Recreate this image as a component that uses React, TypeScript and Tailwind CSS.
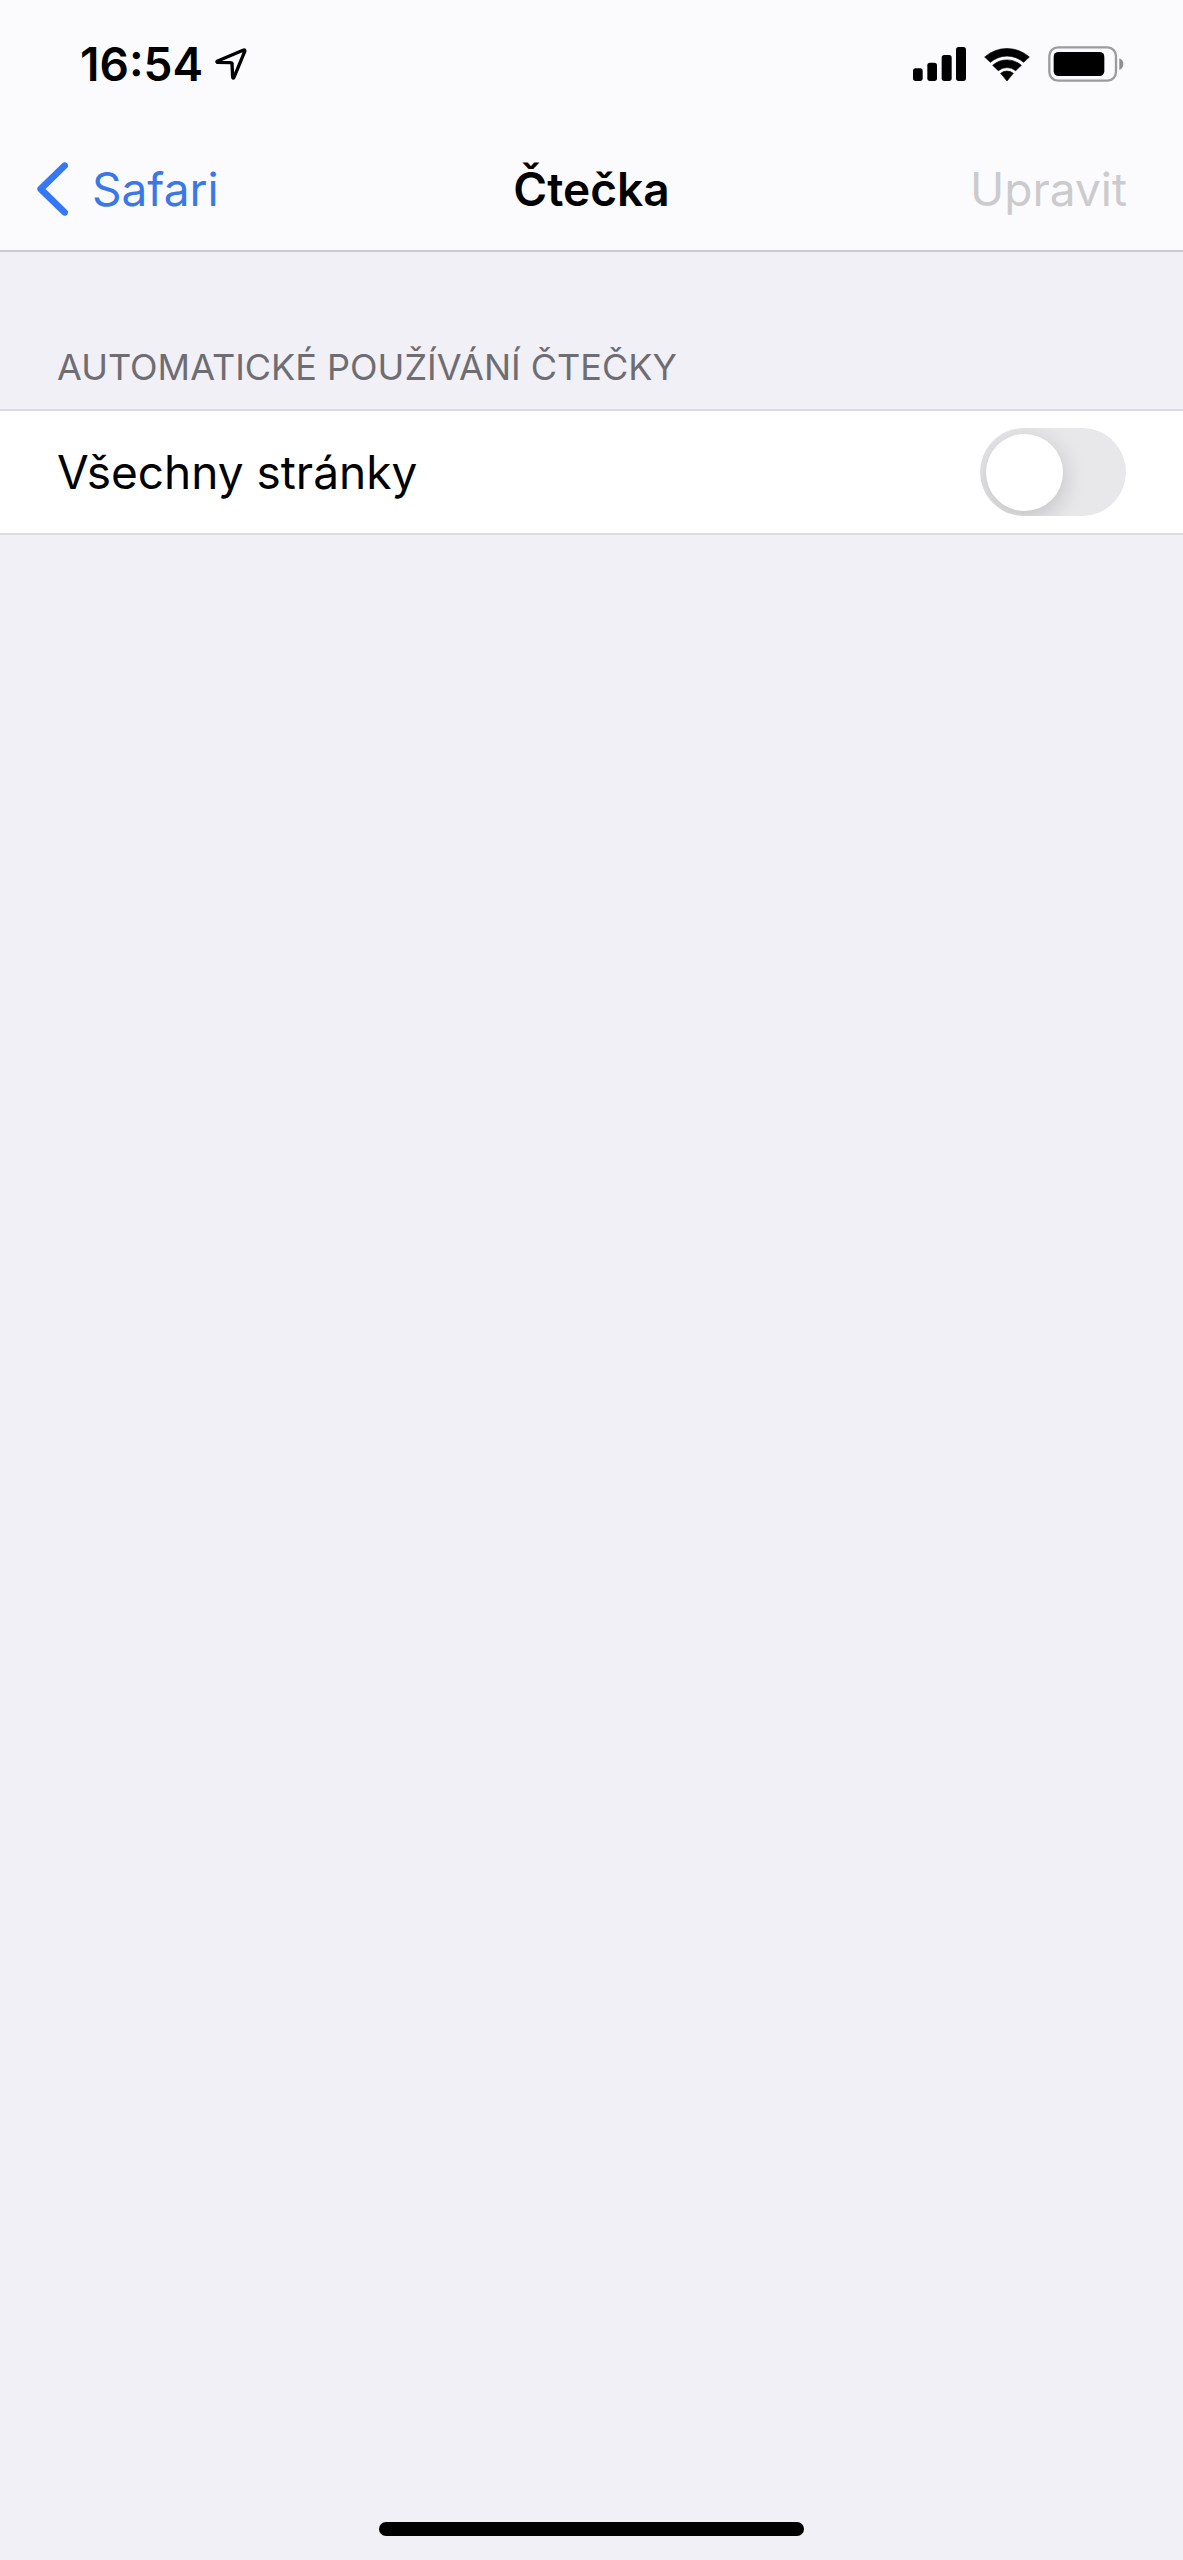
import { useState } from "react";

function LocationArrow() {
  return (
    <svg className="h-8 w-8" viewBox="0 0 96 96" fill="none" aria-hidden="true">
      <path
        d="M7 43 Q4 41 8 39 L84 7 Q91 4 89 11 L57 88 Q54 93 53 87 L51 47 Q51 44 47 44 Z"
        stroke="black"
        strokeWidth="10"
        strokeLinejoin="round"
      />
    </svg>
  );
}

function Signal() {
  return (
    <svg className="h-[34px] w-[53px]" viewBox="0 0 159 102" aria-hidden="true">
      <rect x="0" y="64" width="29" height="38" rx="8" />
      <rect x="43" y="47" width="29" height="55" rx="8" />
      <rect x="86" y="24" width="30" height="78" rx="8" />
      <rect x="129" y="0" width="30" height="102" rx="8" />
    </svg>
  );
}

function Wifi() {
  return (
    <svg className="h-[35px] w-[46px]" viewBox="0 0 138 105" aria-hidden="true">
      <g stroke="black" strokeWidth="2" strokeLinejoin="round">
        <path d="M2 30 A101 101 0 0 1 136 30 L119 46 A76 76 0 0 0 19 46 Z" />
        <path d="M26 55 A65 65 0 0 1 112 55 L95 71 A41 41 0 0 0 43 71 Z" />
        <path d="M50 79 A30 30 0 0 1 88 79 L69 102 Z" />
      </g>
    </svg>
  );
}

function Battery() {
  return (
    <svg className="h-9 w-[76px]" viewBox="0 0 228 108" aria-hidden="true">
      <rect x="4" y="4" width="200" height="100" rx="26" fill="none" stroke="#9b9b9d" strokeWidth="7" />
      <rect x="17" y="18" width="152" height="72" rx="14" />
      <path d="M214 37 Q226 42 226 54 Q226 66 214 72 Z" fill="#8e8e90" />
    </svg>
  );
}

function StatusBar() {
  return (
    <div className="flex h-32 items-center justify-between pr-[59px] pl-20">
      <div className="flex items-center gap-3">
        <span className="text-[46px] leading-none font-semibold">16:54</span>
        <LocationArrow />
      </div>
      <div className="flex items-center gap-[18px]">
        <Signal />
        <Wifi />
        <Battery />
      </div>
    </div>
  );
}

function NavigationBar() {
  return (
    <nav className="grid h-[122px] grid-cols-[1fr_auto_1fr] items-center px-9 text-[46px] leading-none">
      <a href="#safari" className="flex items-center gap-6 justify-self-start text-[#3b78e7]">
        <svg className="h-[54px] w-8" viewBox="0 0 96 162" fill="none" aria-hidden="true">
          <path d="M86 11 L14 81 L86 151" stroke="#3478f6" strokeWidth="20" strokeLinecap="round" strokeLinejoin="round" />
        </svg>
        Safari
      </a>
      <h1 className="font-semibold">Čtečka</h1>
      <button type="button" disabled className="mr-5 justify-self-end text-[#cbcbce]">
        Upravit
      </button>
    </nav>
  );
}

export default function App() {
  const [allPages, setAllPages] = useState(false);

  return (
    <div className="flex min-h-screen flex-col bg-[#f1f0f6] font-['Inter','Liberation_Sans',sans-serif] text-black">
      <header className="border-b-2 border-[#c9c9ce] bg-[#fbfbfd]">
        <StatusBar />
        <NavigationBar />
      </header>
      <main className="flex-1">
        <section aria-labelledby="reader-heading">
          <h2 id="reader-heading" className="px-[57px] pt-[93px] pb-5 text-4xl leading-[44px] text-[#6d6d72] uppercase">
            Automatické používání čtečky
          </h2>
          <label className="flex h-[126px] items-center justify-between border-y-2 border-[#dbdbde] bg-white px-[57px] text-[46px]">
            Všechny stránky
            <input
              type="checkbox"
              role="switch"
              checked={allPages}
              onChange={(e) => setAllPages(e.target.checked)}
              className="flex h-[88px] w-[146px] appearance-none items-center overflow-hidden rounded-full bg-[#e8e8ea] p-[6px] before:size-[77px] before:rounded-full before:bg-white before:shadow-[0_6px_24px_rgba(0,0,0,0.18)] before:content-[''] checked:justify-end checked:bg-[#34c759]"
            />
          </label>
        </section>
      </main>
      <footer className="flex justify-center pb-6">
        <div className="h-[14px] w-[36%] rounded-full bg-black" />
      </footer>
    </div>
  );
}
